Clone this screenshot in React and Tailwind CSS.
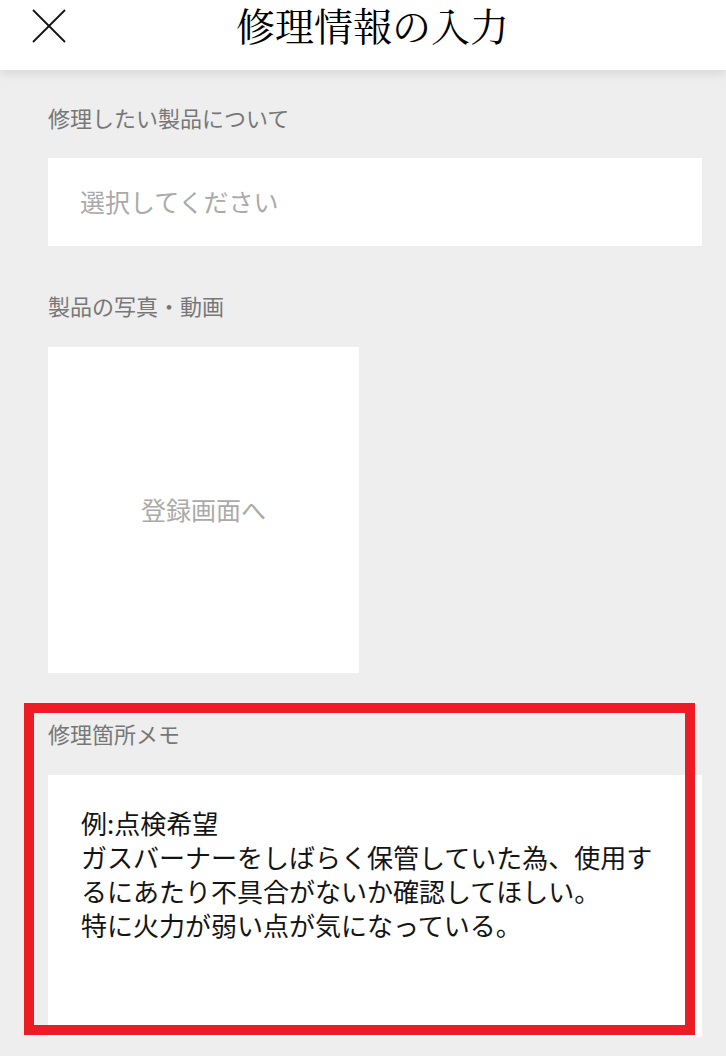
import React from "react";

const jp = { fontFamily: '"Noto Sans CJK JP", "Noto Sans", sans-serif' };
const serif = { fontFamily: '"Noto Serif CJK JP", "Noto Sans CJK JP", serif' };

function CloseIcon() {
  return (
    <svg width="34" height="34" viewBox="0 0 34 34" fill="none">
      <line x1="1" y1="1" x2="33" y2="33" stroke="#111" strokeWidth="1.8" />
      <line x1="33" y1="1" x2="1" y2="33" stroke="#111" strokeWidth="1.8" />
    </svg>
  );
}

export default function App() {
  return (
    <div className="relative min-h-[1056px] w-full bg-[#eeeeee] overflow-hidden" style={jp}>
      <header className="relative z-10 flex h-[70px] items-start bg-white shadow-[0_3px_10px_rgba(0,0,0,0.10)]">
        <div className="ml-[32px] mt-[9px]">
          <CloseIcon />
        </div>
        <h1
          className="ml-[170px] mt-[4px] text-[39px] leading-[40px] font-normal text-black"
          style={serif}
        >
          修理情報の入力
        </h1>
      </header>

      <main className="flex flex-col pl-[48px] pr-[24px] pt-[32px]">
        <div className="text-[22px] leading-[30px] text-[#777777]">修理したい製品について</div>
        <div className="mt-[26px] flex h-[88px] items-center bg-white pl-[32px] text-[25px] text-[#aaaaaa]">
          選択してください
        </div>

        <div className="mt-[44px] text-[22px] leading-[30px] text-[#777777]">製品の写真・動画</div>
        <div className="mt-[27px] flex h-[326px] w-[311px] items-center justify-center bg-white text-[25px] text-[#aaaaaa]">
          登録画面へ
        </div>

        <div className="mt-[45px] text-[22px] leading-[30px] text-[#777777]">修理箇所メモ</div>
        <div className="mt-[27px] h-[262px] bg-white pl-[33px] pr-[30px] pt-[31px] text-[26px] leading-[34px] text-[#141414]">
          <div>例:点検希望</div>
          <div>ガスバーナーをしばらく保管していた為、使用するにあたり不具合がないか確認してほしい。</div>
          <div>特に火力が弱い点が気になっている。</div>
        </div>
      </main>

      <div className="pointer-events-none absolute left-[24px] top-[703px] h-[332px] w-[671px] border-[10px] border-[#ed1c24]" />
    </div>
  );
}
